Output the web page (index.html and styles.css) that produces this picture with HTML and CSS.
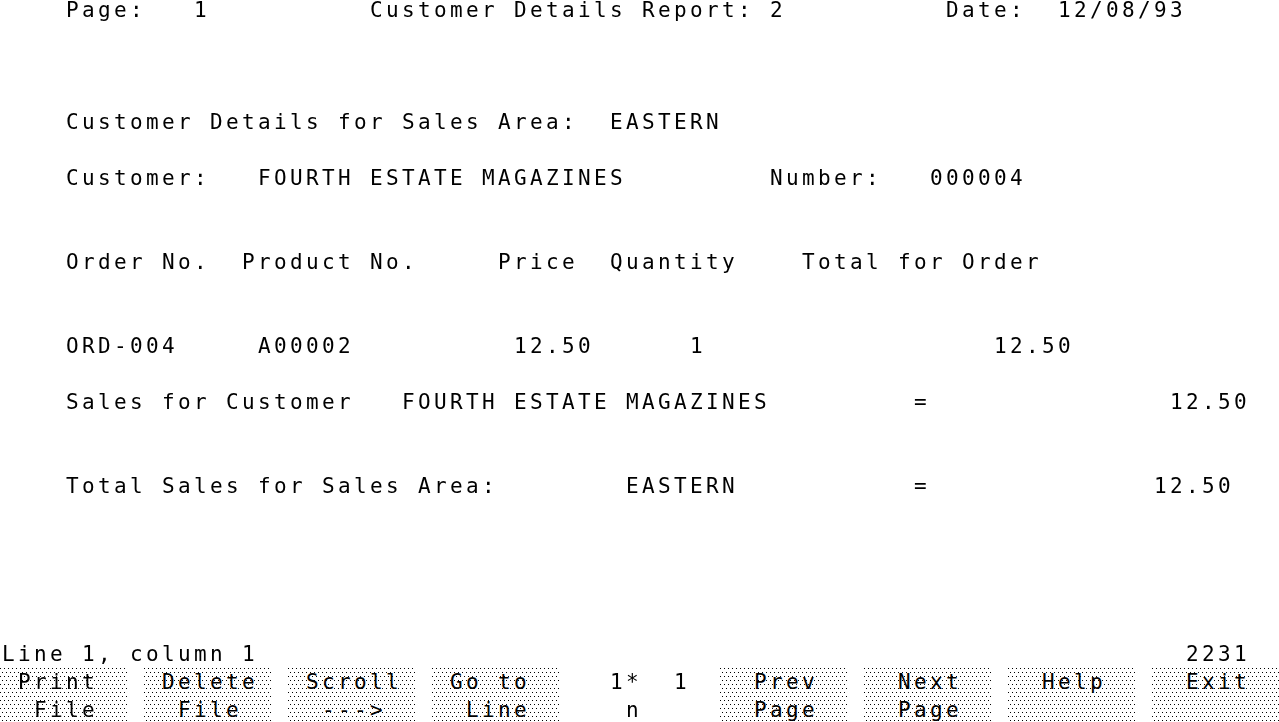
FILE: index.html
```html
<!DOCTYPE html>
<html lang="en">
<head>
<meta charset="utf-8">
<title>Customer Details Report</title>
<link rel="stylesheet" href="styles.css">
</head>
<body>
<main class="screen">
<div class="row">    Page:   1          Customer Details Report: 2          Date:  12/08/93</div>
<div class="row"></div>
<div class="row"></div>
<div class="row"></div>
<div class="row">    Customer Details for Sales Area:  EASTERN</div>
<div class="row"></div>
<div class="row">    Customer:   FOURTH ESTATE MAGAZINES         Number:   000004</div>
<div class="row"></div>
<div class="row"></div>
<div class="row">    Order No.  Product No.     Price  Quantity    Total for Order</div>
<div class="row"></div>
<div class="row"></div>
<div class="row">    ORD-004     A00002          12.50      1                  12.50</div>
<div class="row"></div>
<div class="row">    Sales for Customer   FOURTH ESTATE MAGAZINES         =               12.50</div>
<div class="row"></div>
<div class="row"></div>
<div class="row">    Total Sales for Sales Area:        EASTERN           =              12.50</div>
<div class="row"></div>
<div class="row"></div>
<div class="row"></div>
<div class="row"></div>
<div class="row"></div>
<div class="row">Line 1, column 1                                                          2231</div>
<div class="keys">
  <div class="key shaded"><div class="row"> Print</div><div class="row">  File</div></div>
  <div class="key shaded"><div class="row"> Delete</div><div class="row">  File</div></div>
  <div class="key shaded"><div class="row"> Scroll</div><div class="row">  ---&gt;</div></div>
  <div class="key shaded"><div class="row"> Go to</div><div class="row">  Line</div></div>
  <div class="key"><div class="row">  1*  1</div><div class="row">   n</div></div>
  <div class="key shaded"><div class="row">  Prev</div><div class="row">  Page</div></div>
  <div class="key shaded"><div class="row">  Next</div><div class="row">  Page</div></div>
  <div class="key shaded"><div class="row">  Help</div><div class="row"></div></div>
  <div class="key shaded"><div class="row">  Exit</div><div class="row"></div></div>
</div>
</main>
</body>
</html>
```

FILE: styles.css
```css
html, body {
  margin: 0;
  padding: 0;
  background: #fff;
  overflow: hidden;
}

.screen {
  display: block;
  margin-top: -4px;
  width: 1280px;
  font-family: "DejaVu Sans Mono", "Liberation Mono", monospace;
  font-size: 21px;
  line-height: 28px;
  letter-spacing: 3.357px;
  color: #000;
}

.row {
  height: 28px;
  padding-left: 2px;
  white-space: pre;
}

.keys {
  display: grid;
  grid-template-columns: repeat(9, 128px);
  column-gap: 16px;
}

.key {
  position: relative;
  height: 56px;
}

.shaded {
  background-color: #000;
  background-image:
    repeating-linear-gradient(to right, transparent 0 1px, #fff 1px 4px),
    repeating-linear-gradient(to bottom, transparent 0 1px, #fff 1px 8px);
}

.shaded::before {
  content: "";
  position: absolute;
  inset: 0;
  background-color: #000;
  background-image:
    repeating-linear-gradient(to right, transparent 0 1px, #fff 1px 4px),
    repeating-linear-gradient(to bottom, transparent 0 1px, #fff 1px 8px);
  background-position: 2px 4px;
  mix-blend-mode: multiply;
  pointer-events: none;
}
```
